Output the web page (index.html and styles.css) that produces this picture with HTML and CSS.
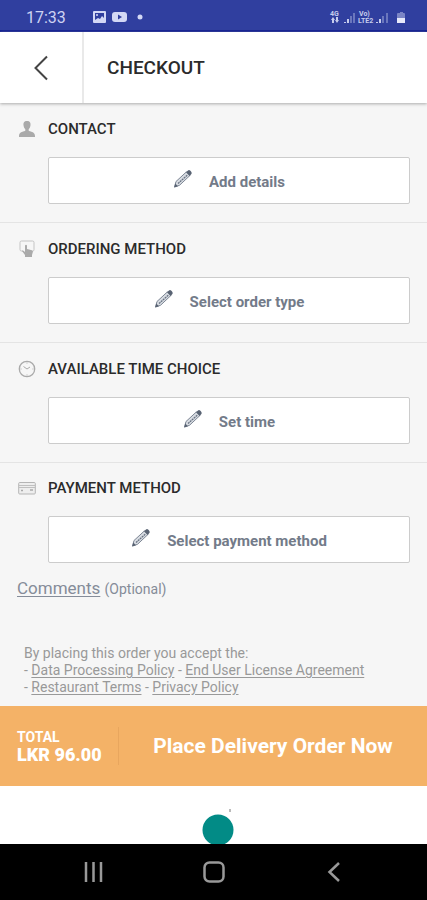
FILE: index.html
```html
<!DOCTYPE html>
<html lang="en">
<head>
<meta charset="utf-8">
<meta name="viewport" content="width=device-width, initial-scale=1">
<title>Checkout</title>
<link rel="stylesheet" href="styles.css">
</head>
<body>
<svg class="defs" width="0" height="0" aria-hidden="true">
  <symbol id="pencil" viewBox="0 0 20 20">
    <path d="M1.500 18 L3 12.500 L13.500 2.800 L17 6.400 L6.500 16.300 Z" fill="#d9dde3" stroke="#7d8694" stroke-width="1"/>
    <path d="M1.200 18.500 L2.300 14.500 L5 17.200 Z M13 3.200 L15 1.400 Q16.200 .6 17.400 1.800 L18.400 3 Q19.200 4.200 18.200 5.300 L16.600 6.900 Z" fill="#596373"/>
    <path d="M5 14.500 L14.700 5.800" fill="none" stroke="#687282" stroke-width="1.300" stroke-dasharray="2 .6"/>
  </symbol>
</svg>
<div class="screen">
  <div class="status">
    <span class="clock">17:33</span>
    <svg class="notices" width="54" height="14" viewBox="0 0 54 14" aria-hidden="true">
      <rect x="1" y="1" width="13" height="12" rx="1" fill="#d3d8f5"/>
      <path d="M3 3h9v5l-2-2-2 3-2-1-3 2z" fill="#303f9f"/><circle cx="5" cy="5" r="1" fill="#d3d8f5"/>
      <rect x="20" y="2" width="15" height="10" rx="3" fill="#d3d8f5"/>
      <path d="M26 4.500v5l4-2.500z" fill="#303f9f"/>
      <circle cx="48" cy="7" r="2.500" fill="#d3d8f5"/>
    </svg>
    <svg class="signals" width="76" height="16" viewBox="0 0 76 16" aria-hidden="true">
      <g fill="#c6ccec" font-family="Roboto, sans-serif" font-weight="700">
        <text x="1" y="7" font-size="7">4G</text>
        <text x="30" y="7" font-size="7">Vo)</text>
        <text x="29" y="14" font-size="7">LTE2</text>
        <path d="M4 8l2 3H5v3H3v-3H2zM8 14l-2-3h1V8h2v3h1z"/>
        <path d="M15 13h2v1h-2zM18 10h2v4h-2zM47 13h2v1h-2zM50 10h2v4h-2z"/>
        <path d="M21 7h2v7h-2zM24 4h2v10h-2zM53 7h2v7h-2zM57 4h2v10h-2z" opacity=".4"/>
        <path d="M71 3h3v1h1q1 0 1 1v4h-8V5q0-1 1-1h2z" opacity=".5"/>
        <path d="M68 9h8v5h-8z" fill="#e8eafa"/>
      </g>
    </svg>
  </div>
  <header class="header">
    <button class="back" aria-label="Back">
      <svg width="16" height="26" viewBox="0 0 16 26"><path d="M14 1.500L2.500 13 14 24.500" fill="none" stroke="#444" stroke-width="2"/></svg>
    </button>
    <h1>CHECKOUT</h1>
  </header>
  <main>
    <section class="step">
      <svg class="step-icon" viewBox="0 0 18 18" aria-hidden="true"><path d="M9 1c3 0 3.800 2 3.500 4.200-.2 2-1 3.300-1.800 4v1.500c3 1.200 6.300 1.300 6.300 5.300v1H1v-1c0-4 3.300-4.100 6.300-5.300V9.200c-.8-.7-1.600-2-1.800-4C5.200 3 6 1 9 1z" fill="#aaa"/></svg>
      <h2>CONTACT</h2>
      <button class="choice"><svg><use href="#pencil"/></svg><span>Add details</span></button>
    </section>
    <section class="step">
      <svg class="step-icon" viewBox="0 0 18 18" aria-hidden="true"><path d="M5 11H3.500Q2 11 2 9.500V2.500Q2 1 3.500 1h11Q16 1 16 2.500v7Q16 11 15 11" fill="none" stroke="#c4c4c4"/><path d="M7 5.500q1-1.500 2 0V9l5 1.200q1 .3 1 1.300l-1 3.500v2H7v-2l-3-4q.5-1 1.500-.3L7 12z" fill="#aaa"/></svg>
      <h2>ORDERING METHOD</h2>
      <button class="choice"><svg><use href="#pencil"/></svg><span>Select order type</span></button>
    </section>
    <section class="step">
      <svg class="step-icon" viewBox="0 0 18 18" aria-hidden="true"><circle cx="9" cy="9" r="7.700" fill="none" stroke="#aaa" stroke-width="1.300"/><path d="M5.500 6.500L9 9l3-2M9 2.500v1M9 14.500v1M2.500 9h1M14.500 9h1" fill="none" stroke="#aaa"/></svg>
      <h2>AVAILABLE TIME CHOICE</h2>
      <button class="choice"><svg><use href="#pencil"/></svg><span>Set time</span></button>
    </section>
    <section class="step">
      <svg class="step-icon" viewBox="0 0 18 18" aria-hidden="true"><rect x=".7" y="3.500" width="16.600" height="11.500" rx="1" fill="#eee" stroke="#b5b5b5"/><path d="M1 6.500h16M1 8.500h16" stroke="#c0c0c0"/><path d="M3 11.500h2M12 11h3" stroke="#aaa" stroke-width="1.500"/></svg>
      <h2>PAYMENT METHOD</h2>
      <button class="choice"><svg><use href="#pencil"/></svg><span>Select payment method</span></button>
    </section>
    <p class="comments"><a href="#comments">Comments</a> <span>(Optional)</span></p>
    <p class="terms">By placing this order you accept the:<br>- <a href="#data">Data Processing Policy</a> - <a href="#license">End User License Agreement</a><br>- <a href="#terms">Restaurant Terms</a> - <a href="#privacy">Privacy Policy</a></p>
  </main>
  <div class="order">
    <div class="total"><span>TOTAL</span><strong>LKR 96.00</strong></div>
    <button class="place">Place Delivery Order Now</button>
  </div>
  <div class="below">
    <svg width="36" height="36" viewBox="0 0 36 36" aria-hidden="true"><circle cx="18" cy="22" r="15.500" fill="#028b86"/><path d="M30 1v3" stroke="#777"/></svg>
  </div>
  <nav class="keys">
    <button aria-label="Recent apps"><svg width="22" height="22" viewBox="0 0 22 22"><path d="M3 1v20M10.500 1v20M18 1v20" stroke="#999" stroke-width="2.500"/></svg></button>
    <button aria-label="Home"><svg width="22" height="22" viewBox="0 0 22 22"><rect x="1.500" y="1.500" width="19" height="19" rx="5" fill="none" stroke="#999" stroke-width="2.500"/></svg></button>
    <button aria-label="Back"><svg width="22" height="22" viewBox="0 0 22 22"><path d="M16 2L6.500 11 16 20" fill="none" stroke="#999" stroke-width="2.500"/></svg></button>
  </nav>
</div>
</body>
</html>
```
FILE: styles.css
```css
* { box-sizing: border-box; }
body { margin: 0; background: #fff; font-family: Roboto, sans-serif; color: #2b2b2b; }
h1, h2, p { margin: 0; }
button { margin: 0; padding: 0; border: 0; background: none; font: inherit; color: inherit; }
svg { display: block; flex: none; }
.defs { position: absolute; }
.screen { min-height: 100vh; display: flex; flex-direction: column; }

.status { height: 32px; display: flex; align-items: center; padding: 4px 22px 0 26px; background: #303f9f; border-bottom: 2px solid #101e91; }
.clock { font-size: 16px; color: #cdd3f3; }
.notices { margin-left: 26px; }
.signals { margin-left: auto; }

.header { position: relative; height: 71px; display: flex; align-items: center; background: #fff; box-shadow: 0 1px 3px #aaa; }
.back { width: 84px; height: 100%; display: grid; place-items: center; border-right: 2px solid #e9e9e9; }
h1 { padding-left: 23px; font-size: 19px; font-weight: 500; }

main { background: #f6f6f6; }
.step { display: grid; grid-template-columns: 18px 1fr; column-gap: 12px; row-gap: 18px; padding: 16px 17px 18px 18px; border-bottom: 1px solid #e4e4e4; }
.step:nth-of-type(4) { border-bottom: 0; padding-top: 15px; padding-bottom: 13px; }
.step-icon { width: 18px; height: 18px; align-self: center; }
h2 { font-size: 15px; font-weight: 500; line-height: 20px; }
.choice { grid-column: 2; height: 47px; display: flex; align-items: center; justify-content: center; gap: 16px; background: #fff; border: 1px solid #ccc; border-radius: 2px; color: #737b89; font-size: 15px; font-weight: 700; }
.choice svg { width: 20px; height: 20px; margin-bottom: 4px; }
.choice span { padding-top: 3px; }

a { color: inherit; text-underline-offset: 2px; }
.comments { padding: 0 17px; line-height: 24px; font-size: 17px; color: #858c99; }
.comments span { font-size: 14px; }
.terms { padding: 44px 24px 10px; font-size: 14px; line-height: 17px; color: #999; }

.order { height: 80px; display: flex; align-items: center; padding-left: 17px; background: #f4b267; color: #fff; }
.total { width: 102px; height: 38px; display: flex; flex-direction: column; justify-content: center; border-right: 1px solid #e8a65e; font-size: 14px; font-weight: 700; line-height: 17px; }
.total strong { font-size: 18px; }
.place { flex: 1; height: 100%; font-size: 21px; font-weight: 700; }

.below { flex: 1; min-height: 58px; display: flex; align-items: flex-end; justify-content: center; padding-left: 8px; overflow: hidden; }
.keys { height: 56px; display: flex; justify-content: center; align-items: center; gap: 98px; background: #000; }
```
